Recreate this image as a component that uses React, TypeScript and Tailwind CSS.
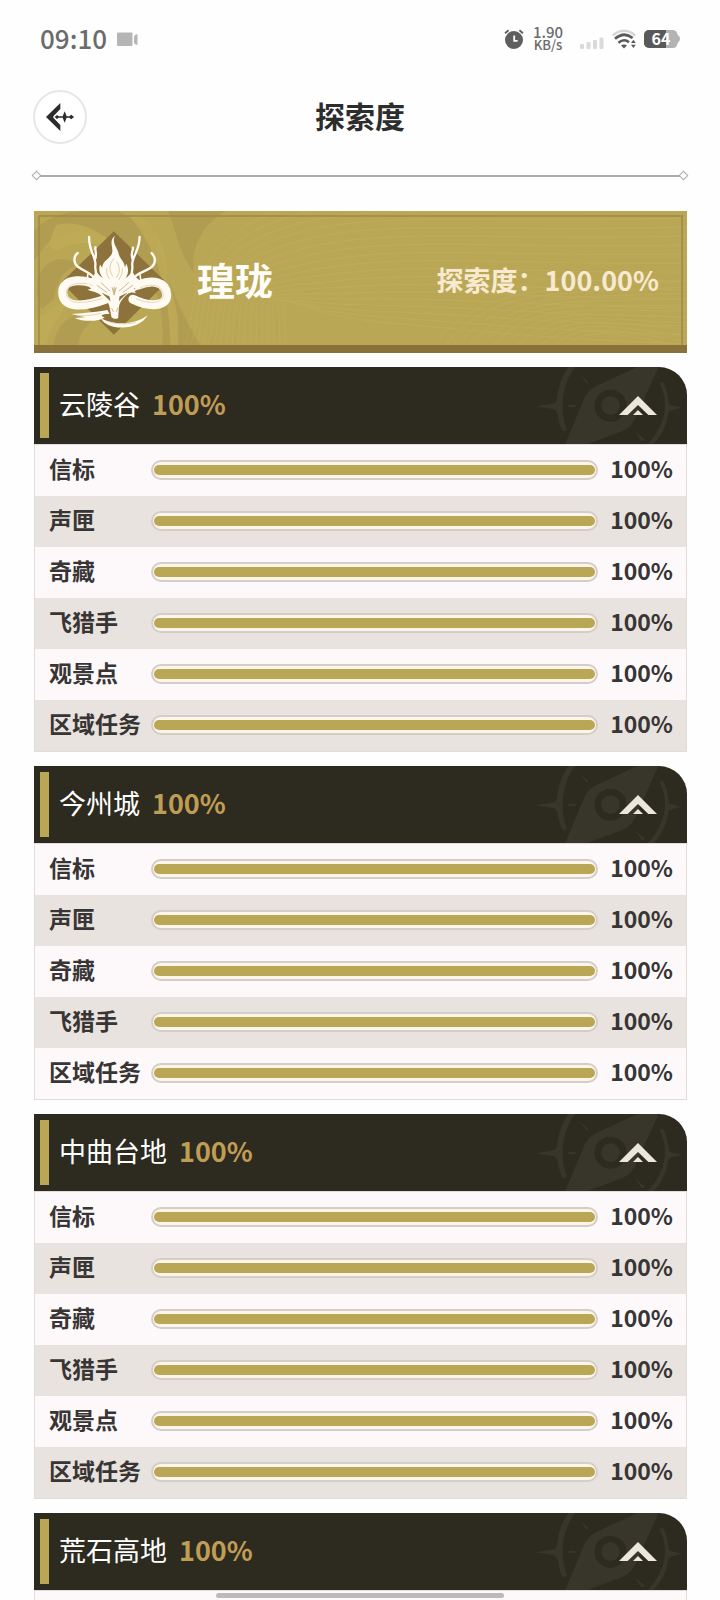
import React, { useState } from 'react';

interface Item {
  name: string;
  percent: number;
}

interface Area {
  name: string;
  percent: number;
  items: Item[];
}

const full = (...names: string[]): Item[] => names.map(name => ({ name, percent: 100 }));

const areas: Area[] = [
  { name: '云陵谷', percent: 100, items: full('信标', '声匣', '奇藏', '飞猎手', '观景点', '区域任务') },
  { name: '今州城', percent: 100, items: full('信标', '声匣', '奇藏', '飞猎手', '区域任务') },
  { name: '中曲台地', percent: 100, items: full('信标', '声匣', '奇藏', '飞猎手', '观景点', '区域任务') },
  { name: '荒石高地', percent: 100, items: full('信标', '声匣', '奇藏', '飞猎手', '观景点', '区域任务') },
];

function StatusBar() {
  return (
    <div className="flex h-[78px] shrink-0 items-center justify-between px-10 text-[#6b6b6b]">
      <div className="flex items-center gap-[10px]">
        <span className="pb-[2px] text-[26px] leading-8 font-medium">09:10</span>
        <svg className="h-4 w-[21px]" viewBox="0 0 21 16" fill="#b5b5b5">
          <rect x="0" y="1.5" width="15.5" height="13.5" rx="1" />
          <path d="M17 5.5Q18 3 20.5 3v11Q18 14 17 12Z" />
        </svg>
      </div>
      <div className="flex items-center">
        <svg className="h-5 w-5" viewBox="0 0 20 20">
          <circle cx="10" cy="11" r="9" fill="#5f5f5f" />
          <path d="M1 4.2 4.6 1.2M19 4.2 15.4 1.2" stroke="#5f5f5f" strokeWidth="1.8" />
          <path d="M10.2 6.4v5.4h3.4" fill="none" stroke="#fff" strokeWidth="1.8" />
        </svg>
        <div className="ml-2 w-8 pb-[2px] text-center font-medium whitespace-nowrap">
          <div className="text-[15px] leading-[13px]">1.90</div>
          <div className="text-[13px] leading-[13px]">KB/s</div>
        </div>
        <svg className="mt-2 ml-4 h-3 w-6" viewBox="0 0 24 12" fill="#dadada">
          <rect x="0" y="7" width="4" height="5" rx="1" />
          <rect x="6.5" y="5" width="4" height="7" rx="1" />
          <rect x="13" y="3" width="4" height="9" rx="1" />
          <rect x="19.5" y="0.5" width="4" height="11.5" rx="1" />
        </svg>
        <svg className="ml-2 h-5 w-6" viewBox="0 0 24 20" fill="none">
          <path d="M0.8 6.5Q12-3 23.2 6.5" stroke="#d6d6d6" strokeWidth="2.4" />
          <path d="M3 9.8Q12 2 20.6 9" stroke="#5a5a5a" strokeWidth="2.8" />
          <path d="M6.4 13.8Q12 9 17 13.2" stroke="#5a5a5a" strokeWidth="2.6" />
          <path d="M9 16.4Q12 14.4 15 16.4L12 19.4Z" fill="#5a5a5a" />
          <path d="M21.4 10.8 23.8 14H19ZM21.4 19 23.8 15.8H19Z" fill="#5a5a5a" />
        </svg>
        <div className="relative ml-2 flex h-[18px] w-9 items-center justify-center">
          <svg className="absolute inset-0 h-full w-full" viewBox="0 0 36 18">
            <path d="M5 0H29a5 5 0 0 1 4.4 4.6Q36 6.6 36 9T33.4 13.4A5 5 0 0 1 29 18H5a5 5 0 0 1-5-5V5a5 5 0 0 1 5-5Z" fill="#b3b3b3" />
            <path d="M5 0H22V18H5a5 5 0 0 1-5-5V5a5 5 0 0 1 5-5Z" fill="#595959" />
          </svg>
          <span className="relative pr-[2px] pb-[2px] text-[16px] leading-[18px] font-bold text-white">64</span>
        </div>
      </div>
    </div>
  );
}

function TopBar() {
  return (
    <header className="shrink-0 px-[33px]">
      <div className="relative flex h-[78px] items-center justify-center">
        <button
          aria-label="返回"
          className="absolute left-0 flex h-[54px] w-[54px] items-center justify-center rounded-full border-2 border-[#e6e6e6] bg-white"
        >
          <svg className="h-7 w-7" viewBox="0 0 84 84" fill="#2c2c2c">
            <path d="M43 0 0 42 43 84V66L22 44V40L43 18Z" />
            <path d="M26 42 33 36 38 40H50L56 25 62 40H70L76 35 84 42 76 49 70 44H62L56 59 50 44H38L33 48Z" />
          </svg>
        </button>
        <h1 className="pb-1 text-[30px] leading-10 font-bold text-[#2d2d2d]">探索度</h1>
      </div>
      <div className="mt-4 flex items-center">
        <i className="h-[7px] w-[7px] rotate-45 border border-[#aaa]" />
        <i className="h-[2px] flex-1 bg-[#aaa]" />
        <i className="h-[7px] w-[7px] rotate-45 border border-[#aaa]" />
      </div>
    </header>
  );
}

/* White dragon head over a brown diamond */
function Emblem() {
  return (
    <svg className="mt-1 h-[107px] w-[117px] shrink-0" viewBox="110 90 350 320" fill="#fffaf2">
      <path d="M283 97 440 250 283 406 126 250Z" fill="#8d733b" />
      <g fill="none" strokeLinecap="round">
        {/* coils */}
        <path d="M238 262C205 240 130 232 130 280C130 330 200 322 258 300" stroke="#fffaf2" strokeWidth="27" />
        <path d="M340 300C390 325 444 322 441 286C438 248 400 240 356 258" stroke="#fffaf2" strokeWidth="27" />
        <path d="M228 262C195 246 140 248 141 282C143 320 200 312 248 298M350 299C395 318 434 310 431 286C428 258 398 250 362 266" stroke="#d8c9a4" strokeWidth="2" />
        {/* antlers */}
        <path d="M268 282C246 262 224 232 228 196C228 170 208 156 209 114M226 182C234 166 226 158 228 144" stroke="#fffaf2" strokeWidth="7" />
        <path d="M300 282C322 262 342 232 338 196C338 170 360 156 360 114M340 182C332 166 340 158 340 146" stroke="#fffaf2" strokeWidth="7" />
        <path d="M232 250C218 210 164 216 165 180Q166 168 175 162" stroke="#fffaf2" strokeWidth="7" />
        <path d="M334 250C350 210 406 220 406 182Q404 170 396 162" stroke="#fffaf2" strokeWidth="7" />
        <path d="M206 222C200 250 206 264 226 272M360 222C368 250 362 264 344 274" stroke="#fffaf2" strokeWidth="5" />
      </g>
      {/* tail */}
      <path d="M156 344C180 342 216 340 264 332L270 344C246 344 238 350 256 354C240 368 190 368 166 356L198 354Z" />
      <path d="M244 357C290 382 350 374 384 348C366 380 322 390 282 382C262 378 250 368 244 357Z" />
      <path d="M172 350Q210 350 246 343M262 366Q300 380 348 370" fill="none" stroke="#d8c9a4" strokeWidth="2" />
      {/* mane flames */}
      <path d="M286 110C262 132 292 152 270 174C262 184 250 188 248 206L242 196C234 216 246 232 256 246L284 262L312 246C326 228 330 212 320 194L316 206C316 188 302 180 298 166C294 144 276 134 286 110Z" />
      <path d="M283 178C270 196 266 210 280 232M292 188C304 208 300 222 290 236M262 206Q258 224 270 240M309 208Q310 226 298 242" fill="none" stroke="#cdb987" strokeWidth="2" />
      {/* head */}
      <path d="M204 246C218 240 226 226 230 214C240 236 258 240 268 246L284 258L300 246C318 240 330 230 338 214C342 228 352 240 368 248C350 250 348 258 362 264C342 262 338 272 350 282C330 276 322 286 316 292C306 302 300 312 298 324L296 356Q286 362 276 354L270 322C266 304 254 296 244 288C232 278 220 278 204 272L226 266C218 256 210 250 204 246Z" />
      <path d="M246 280 270 292 273 306 264 298ZM324 280 300 292 298 306 306 298Z" fill="#8d733b" />
      <path d="M244 250 272 276M328 250 298 276M284 262V286M276 326 282 338M295 326 290 338M232 258 262 280M340 258 310 280" fill="none" stroke="#b09a68" strokeWidth="2" />
      <path d="M276 262 284 270 292 262 286 288H282Z" fill="#cdbd94" />
    </svg>
  );
}

function BannerTexture() {
  return (
    <svg
      className="absolute inset-0 h-full w-full"
      viewBox="0 0 653 134"
      preserveAspectRatio="xMidYMid slice"
      fill="none"
    >
      <rect width="653" height="134" fill="#baa755" />
      {/* swirls behind the emblem */}
      <g fill="#ac9850" opacity="0.6">
        <path d="M0 20C16 2 40 0 56 0H84C100 10 118 8 124 30C130 58 140 90 166 134H128C132 96 118 60 92 38C72 20 34 12 12 34L0 50Z" />
        <path d="M4 66C12 46 32 44 44 54C30 58 22 70 20 88L8 98C2 88 2 76 4 66Z" />
        <path d="M20 134C22 110 44 96 70 104C56 108 46 120 44 134Z" />
        <path d="M134 0H192C168 14 156 36 160 62C146 44 142 20 134 0Z" />
      </g>
      <g fill="#c1ad58" opacity="0.7">
        <path d="M22 14C46 8 72 22 88 42C66 30 40 28 22 40L14 34Z" />
        <path d="M104 4C126 20 132 40 134 68C142 90 146 112 144 134H136C136 90 126 40 96 6Z" />
        <path d="M0 110C16 98 28 90 40 86C26 102 16 118 12 134H0Z" />
      </g>
      {/* contour lines */}
      <g stroke="#cdbb6d" strokeWidth="1" opacity="0.28">
        {Array.from({ length: 18 }, (_, i) => (
          <path
            key={i}
            d={`M${150 + i * 6} 134C${165 + i * 5} ${110 - i * 3} ${145 + i * 5} ${50 + i * 3} ${220 + i * 8} ${10 + i * 6}S${420 + i * 4} ${i * 8 - 10} 653 ${i * 9 - 20}`}
          />
        ))}
        {Array.from({ length: 12 }, (_, i) => (
          <path key={i} d={`M${400 + i * 12} 134C${450 + i * 10} ${70 + i * 4} ${520 + i * 6} ${80 + i * 4} 653 ${70 + i * 6}`} />
        ))}
      </g>
    </svg>
  );
}

function Banner() {
  return (
    <section className="relative shrink-0 overflow-hidden border-b-8 border-[#8a713a]">
      <BannerTexture />
      <div className="absolute inset-x-1 top-1 bottom-0 border-2 border-b-0 border-[#a18c49]/80" />
      <div className="relative flex h-[134px] items-center justify-between pr-7 pl-[22px]">
        <div className="flex items-center gap-6 pt-1">
          <Emblem />
          <h2 className="pb-[2px] text-[38px] leading-[52px] font-bold text-[#fffdf8]">瑝珑</h2>
        </div>
        <p className="flex items-center pt-1 text-[27px] leading-9 font-bold text-[#f7ead0]">
          <span>探索度：</span>
          <span>100.00%</span>
        </p>
      </div>
    </section>
  );
}

function Compass() {
  return (
    <svg className="absolute right-0 top-0 h-[77px] w-[154px]" viewBox="100 33 461 231" fill="#38362b">
      <path d="M226 33H206C168 84 160 160 188 226L202 222C178 160 186 84 226 33Z" />
      <path d="M478 80C506 130 504 200 444 264H462C510 212 520 140 490 78Z" />
      <path d="M108 151 164 142 176 126V176L164 160ZM206 146H228V153H206Z" />
      <path d="M546 155 510 146 498 124V182L510 164Z" />
      <path d="M238 54 266 78 262 84ZM404 224 436 252 426 256Z" />
      <path d="M476 33H412L285 92Q262 106 254 126L196 264H262L366 226Q394 214 406 188Z" />
      <circle cx="332" cy="149" r="48" fill="#2d2a20" />
      <circle cx="332" cy="149" r="28" />
    </svg>
  );
}

function ItemRow({ item }: { item: Item }) {
  return (
    <li className="flex h-[51px] items-center bg-[#fdf9fb] pr-[13px] pb-[2px] pl-[14px] even:bg-[#e8e3de]">
      <span className="w-[102px] shrink-0 pb-1 text-[23px] leading-8 font-bold text-[#383534]">{item.name}</span>
      <div
        role="progressbar"
        aria-label={item.name}
        aria-valuenow={item.percent}
        className="h-5 flex-1 rounded-full border-2 border-[#d4cdc8] bg-[#fbf5ea] px-px py-[3px]"
      >
        <div className="h-[10px] rounded-full bg-[#baa755]" style={{ width: `${item.percent}%` }} />
      </div>
      <span className="w-[75px] shrink-0 pb-1 text-right text-[23px] leading-8 font-bold text-[#383534]">
        {item.percent}%
      </span>
    </li>
  );
}

function AreaCard({ area }: { area: Area }) {
  const [open, setOpen] = useState(true);

  return (
    <section className="shrink-0">
      <button
        onClick={() => setOpen(!open)}
        aria-expanded={open}
        className="relative flex h-[77px] w-full items-center overflow-hidden rounded-tr-[28px] bg-[#2d2a20] py-[6px] pr-[30px] pl-[6px]"
      >
        <Compass />
        <span className="h-full w-[9px] bg-[#baa755]" />
        <span className="ml-[10px] pb-1 text-[27px] leading-9 text-white">{area.name}</span>
        <span className="ml-3 pb-1 text-[27px] leading-9 font-bold text-[#c09d54]">{area.percent}%</span>
        <svg
          className={`relative ml-auto h-[19px] w-[38px] ${open ? '' : 'rotate-180'}`}
          viewBox="0 0 114 57"
          fill="#ece7db"
        >
          <path d="M57 0 114 57H88L57 27 26 57H0Z" />
          <path d="M57 42 72 57H42Z" />
        </svg>
      </button>
      {open && (
        <ul className="border border-[#e2dcda]">
          {area.items.map(item => (
            <ItemRow key={item.name} item={item} />
          ))}
        </ul>
      )}
    </section>
  );
}

export default function App() {
  return (
    <div className="flex h-screen flex-col overflow-hidden bg-[#fefefe] font-['Noto_Sans_CJK_SC',sans-serif]">
      <StatusBar />
      <TopBar />
      <main className="mt-8 flex min-h-0 flex-1 flex-col gap-[14px] overflow-y-auto pr-[33px] pl-[34px] [scrollbar-width:none]">
        <Banner />
        {areas.map(area => (
          <AreaCard key={area.name} area={area} />
        ))}
      </main>
      <div className="fixed bottom-[2px] left-1/2 h-[5px] w-[288px] -translate-x-1/2 rounded-full bg-[#bcb9ba]" />
    </div>
  );
}
